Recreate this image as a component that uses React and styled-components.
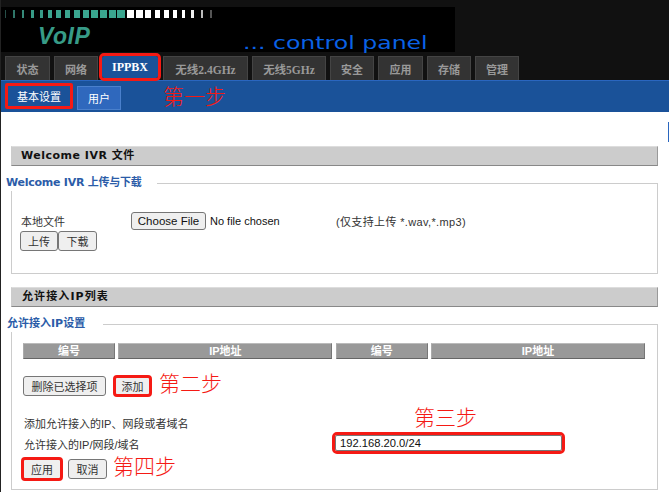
import React from "react";
import styled, { createGlobalStyle } from "styled-components";

const CJK = `"Liberation Sans", "Noto Sans CJK SC", sans-serif`;
const WIDE = `"DejaVu Sans", "Noto Sans CJK SC", sans-serif`;
const SERIF = `"Liberation Serif", "Noto Sans CJK SC", serif`;

const Global = createGlobalStyle`
  html, body { margin: 0; padding: 0; background: #fff; }
  body { width: 669px; height: 492px; overflow: hidden; font-family: ${CJK}; font-size: 11px; color: #333; }
  * { box-sizing: border-box; }
`;

const Page = styled.div`
  width: 669px;
  height: 492px;
  overflow: hidden;
  position: relative;
  border-left: 1px solid #222;
`;

const Header = styled.header`
  background: #111;
  height: 80px;
  padding-top: 7px;
`;

const Logo = styled.div`
  width: 454px;
  height: 45px;
  background: #000;
  display: flex;
  flex-direction: column;
`;

const Bars = styled.div`
  display: grid;
  grid-template-columns: repeat(24, 8.93px);
  height: 8px;
  margin-top: 3px;
`;

const Bar = styled.i`
  display: block;
  justify-self: center;
  height: 8px;
  background: ${p => p.$c};
  width: ${p => p.$w}px;
`;

const LogoText = styled.div`
  display: flex;
  align-items: flex-end;
  flex: 1;
`;

const VoIP = styled.span`
  font: italic bold 23px "Liberation Sans", sans-serif;
  color: #379b87;
  margin-left: 37px;
  margin-bottom: 2px;
  letter-spacing: 0.5px;
`;

const Panel = styled.span`
  font: 18px "DejaVu Sans", sans-serif;
  color: #0a62e6;
  margin-left: 153px;
  margin-bottom: -1px;
  transform: scaleX(1.31);
  transform-origin: left;
  white-space: nowrap;
`;

const Tabs = styled.nav`
  display: flex;
  align-items: flex-start;
  height: 24px;
  margin-top: 4px;
  padding-left: 4px;
`;

const Tab = styled.div`
  width: ${p => p.$w}px;
  margin-right: ${p => p.$m}px;
  height: ${p => (p.$active ? 22 : 24)}px;
  background: ${p => (p.$active ? "#1a5299" : "#333")};
  color: ${p => (p.$active ? "#fff" : "#999")};
  border: 1px solid #444;
  border-bottom: 0;
  font-weight: bold;
  font-size: ${p => p.$size || 11}px;
  font-family: ${SERIF};
  display: flex;
  align-items: center;
  justify-content: center;
  white-space: nowrap;
  ${p => p.$active && "outline: 3px solid #f51a14; outline-offset: 0; border-radius: 2px; border: 0;"}
`;

const SubBar = styled.div`
  height: 32px;
  background: #1a5299;
  border-top: 1px solid #2a66bf;
  padding: 5px 0 0 4px;
  display: flex;
  align-items: flex-start;
`;

const SubTab = styled.div`
  height: 24px;
  width: ${p => p.$w}px;
  margin-right: 4px;
  color: #fff;
  font-size: 11px;
  display: flex;
  align-items: center;
  justify-content: center;
  background: ${p => (p.$boxed ? "#1a5299" : "#2f68bd")};
  border: 1px solid ${p => (p.$boxed ? "#1a5299" : "#4a80cc")};
  ${p => p.$boxed && "outline: 3px solid #f51a14; outline-offset: -3px; border-radius: 2px; margin-top: -3px; height: 26px;"}
`;

const Step = styled.span`
  color: #f51a14;
  font: 21px "Noto Sans CJK SC", sans-serif;
  line-height: 24px;
  font-weight: 300;
  white-space: nowrap;
`;

const FirstStep = styled(Step)`
  margin: -3px 0 0 38px;
`;

const Main = styled.main`
  padding: 34px 11px 0 10px;
  position: relative;
`;

const Mark = styled.i`
  position: absolute;
  right: 0;
  top: 10px;
  width: 1px;
  height: 20px;
  background: #2a66bf;
`;

const SectionHead = styled.h2`
  margin: ${p => p.$top || 0}px 0 0;
  height: 20px;
  background: #ccc;
  border-top: 1px solid #ddd;
  border-bottom: 1px solid #888;
  border-right: 1px solid #999;
  border-left: 1px solid #ccc;
  color: #111;
  font-family: ${WIDE};
  font-size: 11px;
  font-weight: bold;
  line-height: 18px;
  padding-left: ${p => p.$pad}px;
  letter-spacing: ${p => p.$gap}px;
`;

const Fieldset = styled.fieldset`
  margin: 9px 0 0;
  padding: ${p => p.$pad};
  border: 1px solid #ccc;
  height: ${p => p.$h}px;
  min-width: 0;
`;

const Legend = styled.legend`
  margin-left: ${p => p.$l}px;
  padding: 0 ${p => p.$r}px 0 0;
  color: #2b5ca8;
  font-family: ${WIDE};
  font-size: 11px;
  font-weight: bold;
  line-height: 16px;
  letter-spacing: ${p => p.$gap || 0}px;
`;

const FileRow = styled.div`
  display: flex;
  align-items: center;
  height: 18px;
  margin-top: 21px;
`;

const FileLabel = styled.span`
  width: 110px;
`;

const Choose = styled.button`
  font: 11.5px "Liberation Sans", sans-serif;
  color: #111;
  height: 18px;
  width: 75px;
  padding: 0;
  background: #efefef;
  border: 1px solid #767676;
  border-radius: 3px;
`;

const NoFile = styled.span`
  margin-left: 4px;
  width: 126px;
  color: #111;
  font-size: 11px;
`;

const Hint = styled.span`
  letter-spacing: 0.35px;
`;

const Button = styled.button`
  font: 11px ${CJK};
  color: #333;
  width: ${p => p.$w}px;
  height: ${p => p.$h || 20}px;
  padding: 0;
  background: #efefef;
  border: 1px solid #767676;
  border-radius: 3px;
  margin-left: ${p => p.$l || 0}px;
  ${p => p.$boxed && "outline: 3px solid #f51a14; outline-offset: -2px;"}
`;

const Joined = styled.div`
  display: flex;
  margin: 1px 0 0 -1px;
`;

const HeaderRow = styled.div`
  display: grid;
  grid-template-columns: 92px 214px 92px 214px;
  column-gap: 3.33px;
  width: 622px;
`;

const Th = styled.div`
  height: 16px;
  background: #999;
  border-top: 1px solid #bbb;
  border-bottom: 1px solid #666;
  border-right: 1px solid #777;
  border-left: 1px solid #aaa;
  color: #fff;
  text-align: center;
  line-height: 14px;
  font-weight: bold;
  font-size: 11px;
`;

const ActionRow = styled.div`
  display: flex;
  align-items: center;
  height: 24px;
  margin-top: 15px;
`;

const StepAfter = styled(Step)`
  margin-left: ${p => p.$m}px;
  margin-top: -8px;
`;

const Note = styled.div`
  margin-top: 17px;
  padding-left: 1px;
  line-height: 19px;
  height: 19px;
`;

const InputRow = styled.div`
  display: flex;
  align-items: center;
  height: 19px;
  padding-left: 1px;
`;

const RowLabel = styled.span`
  width: 311px;
`;

const InputWrap = styled.div`
  position: relative;
  margin-top: -2px;
`;

const IpInput = styled.input`
  display: block;
  width: 227px;
  height: 16px;
  padding: 0 4px;
  font: 11.2px "Liberation Sans", sans-serif;
  color: #111;
  border: 1px solid #777;
  outline: 3px solid #f51a14;
  outline-offset: 0;
  border-radius: 2px;
`;

const ThirdStep = styled(Step)`
  position: absolute;
  left: 79px;
  top: -31px;
`;

const ApplyRow = styled.div`
  display: flex;
  align-items: center;
  height: 24px;
  margin-top: 4px;
`;

const bars = [
  [1, "#274f48"], [2, "#2f7668"], [2, "#358a79"], [3, "#379b87"], [3, "#379b87"], [4, "#3aa68f"],
  [5, "#3aa68f"], [5, "#3aa68f"], [6, "#3aa68f"], [6, "#3aa68f"], [7, "#3aa68f"], [7, "#3aa68f"],
  [7, "#3aa68f"], [8, "#3aa68f"], [7, "#fff"], [7, "#fff"], [6, "#fff"], [5, "#fff"],
  [5, "#fff"], [4, "#fff"], [3, "#fff"], [3, "#eee"], [2, "#bbb"], [2, "#555"],
];

export default function App() {
  return (
    <Page>
      <Global />
      <Header>
        <Logo>
          <Bars>
            {bars.map(([w, c], i) => <Bar key={i} $w={w} $c={c} />)}
          </Bars>
          <LogoText>
            <VoIP>VoIP</VoIP>
            <Panel>... control panel</Panel>
          </LogoText>
        </Logo>
        <Tabs>
          <Tab $w={45} $m={4}>状态</Tab>
          <Tab $w={44} $m={4}>网络</Tab>
          <Tab $w={56} $m={5} $size={12} $active>IPPBX</Tab>
          <Tab $w={85} $m={4} $size={11.5}>无线2.4GHz</Tab>
          <Tab $w={74} $m={4} $size={11.5}>无线5GHz</Tab>
          <Tab $w={44} $m={4}>安全</Tab>
          <Tab $w={45} $m={4}>应用</Tab>
          <Tab $w={44} $m={4}>存储</Tab>
          <Tab $w={44} $m={0}>管理</Tab>
        </Tabs>
      </Header>
      <SubBar>
        <SubTab $w={68} $boxed>基本设置</SubTab>
        <SubTab $w={44}>用户</SubTab>
        <FirstStep>第一步</FirstStep>
      </SubBar>
      <Main>
        <Mark />
        <SectionHead $pad={9} $gap={0.5}>Welcome IVR 文件</SectionHead>
        <Fieldset $h={99} $pad="0 9px">
          <Legend $l={-15} $r={16} $gap={-0.25}>Welcome IVR 上传与下载</Legend>
          <FileRow>
            <FileLabel>本地文件</FileLabel>
            <Choose>Choose File</Choose>
            <NoFile>No file chosen</NoFile>
            <Hint>(仅支持上传 *.wav,*.mp3)</Hint>
          </FileRow>
          <Joined>
            <Button $w={38}>上传</Button>
            <Button $w={39}>下载</Button>
          </Joined>
        </Fieldset>
        <SectionHead $top={13} $pad={10} $gap={1.1}>允许接入IP列表</SectionHead>
        <Fieldset $h={174} $pad="11px 11px 0">
          <Legend $l={-16} $r={18}>允许接入IP设置</Legend>
          <HeaderRow>
            <Th>编号</Th>
            <Th>IP地址</Th>
            <Th>编号</Th>
            <Th>IP地址</Th>
          </HeaderRow>
          <ActionRow>
            <Button $w={83}>删除已选择项</Button>
            <Button $w={37} $l={8} $boxed>添加</Button>
            <StepAfter $m={8}>第二步</StepAfter>
          </ActionRow>
          <Note>添加允许接入的IP、网段或者域名</Note>
          <InputRow>
            <RowLabel>允许接入的IP/网段/域名</RowLabel>
            <InputWrap>
              <ThirdStep>第三步</ThirdStep>
              <IpInput readOnly value="192.168.20.0/24" />
            </InputWrap>
          </InputRow>
          <ApplyRow>
            <Button $w={40} $h={22} $l={-1} $boxed>应用</Button>
            <Button $w={39} $l={6}>取消</Button>
            <StepAfter $m={6}>第四步</StepAfter>
          </ApplyRow>
        </Fieldset>
      </Main>
    </Page>
  );
}
